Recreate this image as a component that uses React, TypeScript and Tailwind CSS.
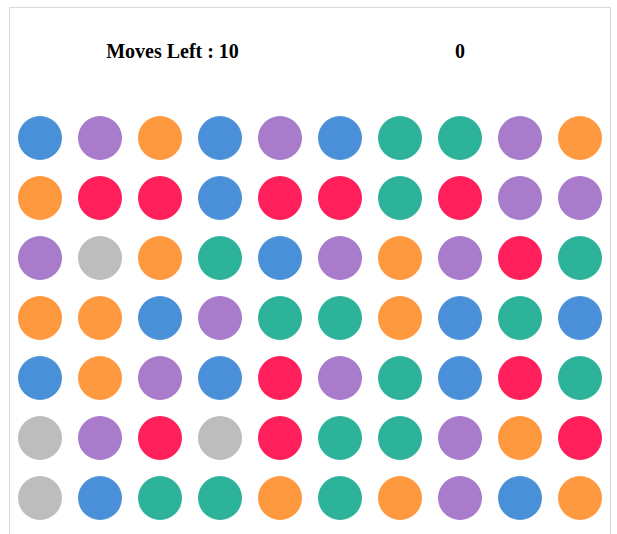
const COLORS: Record<string, string> = {
  b: "bg-[#4a90d9]",
  p: "bg-[#a97ccb]",
  o: "bg-[#ff9940]",
  r: "bg-[#ff1f5a]",
  t: "bg-[#2eb39b]",
  g: "bg-[#bdbdbd]",
};

const BOARD = [
  "bpobpbttpo",
  "orrbrrtrpp",
  "pgotbpopdt".replace("d", "r"),
  "oobpttobtb",
  "bopbrptbrt",
  "gprgrttpor",
  "gbttotopbo",
  "tpbropgtbp",
];

function Candy({ kind }: { kind: string }) {
  return (
    <div className="flex h-[60px] w-[60px] items-center justify-center">
      <div className={`h-[44px] w-[44px] rounded-full ${COLORS[kind]}`} />
    </div>
  );
}

export default function App() {
  return (
    <div className="min-h-screen bg-white pl-[9px] pt-[7px] font-['Liberation_Serif',serif]">
      <div className="w-[602px] border border-[#d9d9d9]">
        <div className="grid h-[100px] grid-cols-2 pt-[28px] text-[20px] font-bold leading-[30px] text-black">
          <div className="pl-[25px] text-center">Moves Left : 10</div>
          <div className="text-center">0</div>
        </div>
        <div className="grid grid-cols-10">
          {BOARD.map((row, r) =>
            row.split("").map((k, c) => <Candy key={`${r}-${c}`} kind={k} />)
          )}
        </div>
      </div>
    </div>
  );
}
